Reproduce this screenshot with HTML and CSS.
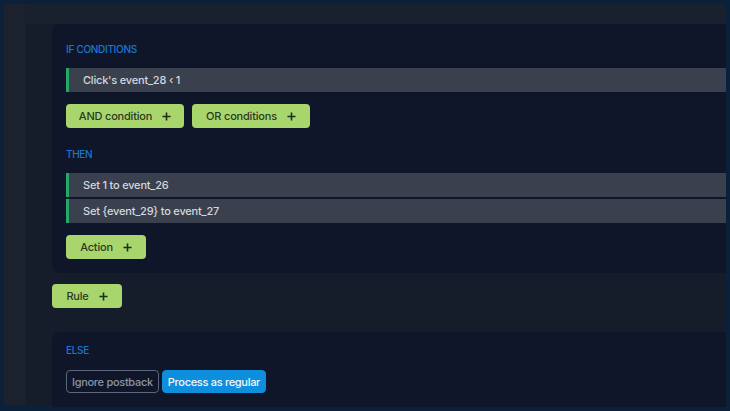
FILE: index.html
```html
<!DOCTYPE html>
<html>
<head>
<meta charset="utf-8">
<link rel="stylesheet" href="styles.css">
</head>
<body>
<div class="frame">
  <div class="sidebar"></div>
  <div class="main">
    <div class="topband"></div>
    <div class="content">
      <section class="card card-rule">
        <h3 class="label">IF CONDITIONS</h3>
        <div class="rows">
          <div class="row">Click's event_28 ‹ 1</div>
        </div>
        <div class="btns">
          <button class="btn-add w-cond">AND condition <svg class="plus" viewBox="0 0 10 10"><path d="M5 0.5V9.5M0.5 5H9.5"/></svg></button>
          <button class="btn-add w-cond">OR conditions <svg class="plus" viewBox="0 0 10 10"><path d="M5 0.5V9.5M0.5 5H9.5"/></svg></button>
        </div>
        <h3 class="label label-then">THEN</h3>
        <div class="rows">
          <div class="row">Set 1 to event_26</div>
          <div class="row">Set {event_29} to event_27</div>
        </div>
        <div class="btns">
          <button class="btn-add w-action">Action <svg class="plus" viewBox="0 0 10 10"><path d="M5 0.5V9.5M0.5 5H9.5"/></svg></button>
        </div>
      </section>
      <div class="rule-wrap">
        <button class="btn-add w-rule">Rule <svg class="plus" viewBox="0 0 10 10"><path d="M5 0.5V9.5M0.5 5H9.5"/></svg></button>
      </div>
      <section class="card card-else">
        <h3 class="label">ELSE</h3>
        <div class="toggle">
          <button class="opt">Ignore postback</button>
          <button class="opt opt-active">Process as regular</button>
        </div>
      </section>
    </div>
  </div>
</div>
</body>
</html>
```

FILE: styles.css
```css
* { box-sizing: border-box; }
html, body {
  margin: 0;
  padding: 0;
  width: 730px;
  height: 411px;
  overflow: hidden;
  background: #0a2139;
  font-family: "Inter", "Noto Sans", sans-serif;
}
.frame {
  display: flex;
  height: 411px;
  padding: 4px 4px 6px 4px;
}
.sidebar {
  width: 22px;
  background: #1c222d;
}
.main {
  flex: 1;
  display: flex;
  flex-direction: column;
  background: #161d2a;
  min-width: 0;
}
.topband {
  height: 20px;
  background: #1a212e;
  flex: none;
}
.content {
  flex: 1;
  display: flex;
  flex-direction: column;
  padding-left: 26px;
}
.card {
  background: #0f162a;
  border-radius: 8px 0 0 8px;
  padding: 19px 0 14px 14px;
}
.label {
  margin: 0;
  font-size: 10px;
  line-height: 12px;
  font-weight: 500;
  color: #1a78d2;
  letter-spacing: -0.3px;
}
.label-then { margin-top: 20px; }
.rows {
  display: flex;
  flex-direction: column;
  gap: 2px;
  margin-top: 13px;
}
.row {
  height: 24px;
  display: flex;
  align-items: center;
  background: #3a404d;
  border-left: 3px solid #25a866;
  padding-left: 14px;
  color: #d4d8de;
  font-size: 11px;
  font-weight: 500;
  letter-spacing: -0.2px;
  white-space: nowrap;
}
.btns {
  display: flex;
  gap: 8px;
  margin-top: 12px;
}
.btn-add {
  height: 24px;
  display: inline-flex;
  align-items: center;
  justify-content: center;
  gap: 10px;
  padding: 0;
  background: #a8d66d;
  border: none;
  border-radius: 4px;
  color: #2a3a24;
  font-family: inherit;
  font-size: 11px;
  font-weight: 500;
  letter-spacing: -0.2px;
  white-space: nowrap;
}
.w-cond { width: 118px; }
.w-action { width: 80px; }
.w-rule { width: 70px; }
.plus {
  width: 9px;
  height: 9px;
  stroke: #1f2f1a;
  stroke-width: 1.8;
  fill: none;
  flex: none;
}
.rule-wrap {
  margin-top: 11px;
  display: flex;
}
.card-else {
  margin-top: 24px;
  flex: 1;
  padding-top: 12px;
  border-radius: 8px 0 0 0;
}
.toggle {
  display: flex;
  gap: 3px;
  margin-top: 14px;
}
.opt {
  height: 23px;
  padding: 0 5px;
  border-radius: 4px;
  font-family: inherit;
  font-size: 11px;
  font-weight: 500;
  letter-spacing: -0.3px;
  border: 1px solid #5c6579;
  background: transparent;
  color: #8b93a3;
  white-space: nowrap;
}
.opt-active {
  background: #0d8fde;
  border-color: #0d8fde;
  color: #f4f8fc;
}
```
